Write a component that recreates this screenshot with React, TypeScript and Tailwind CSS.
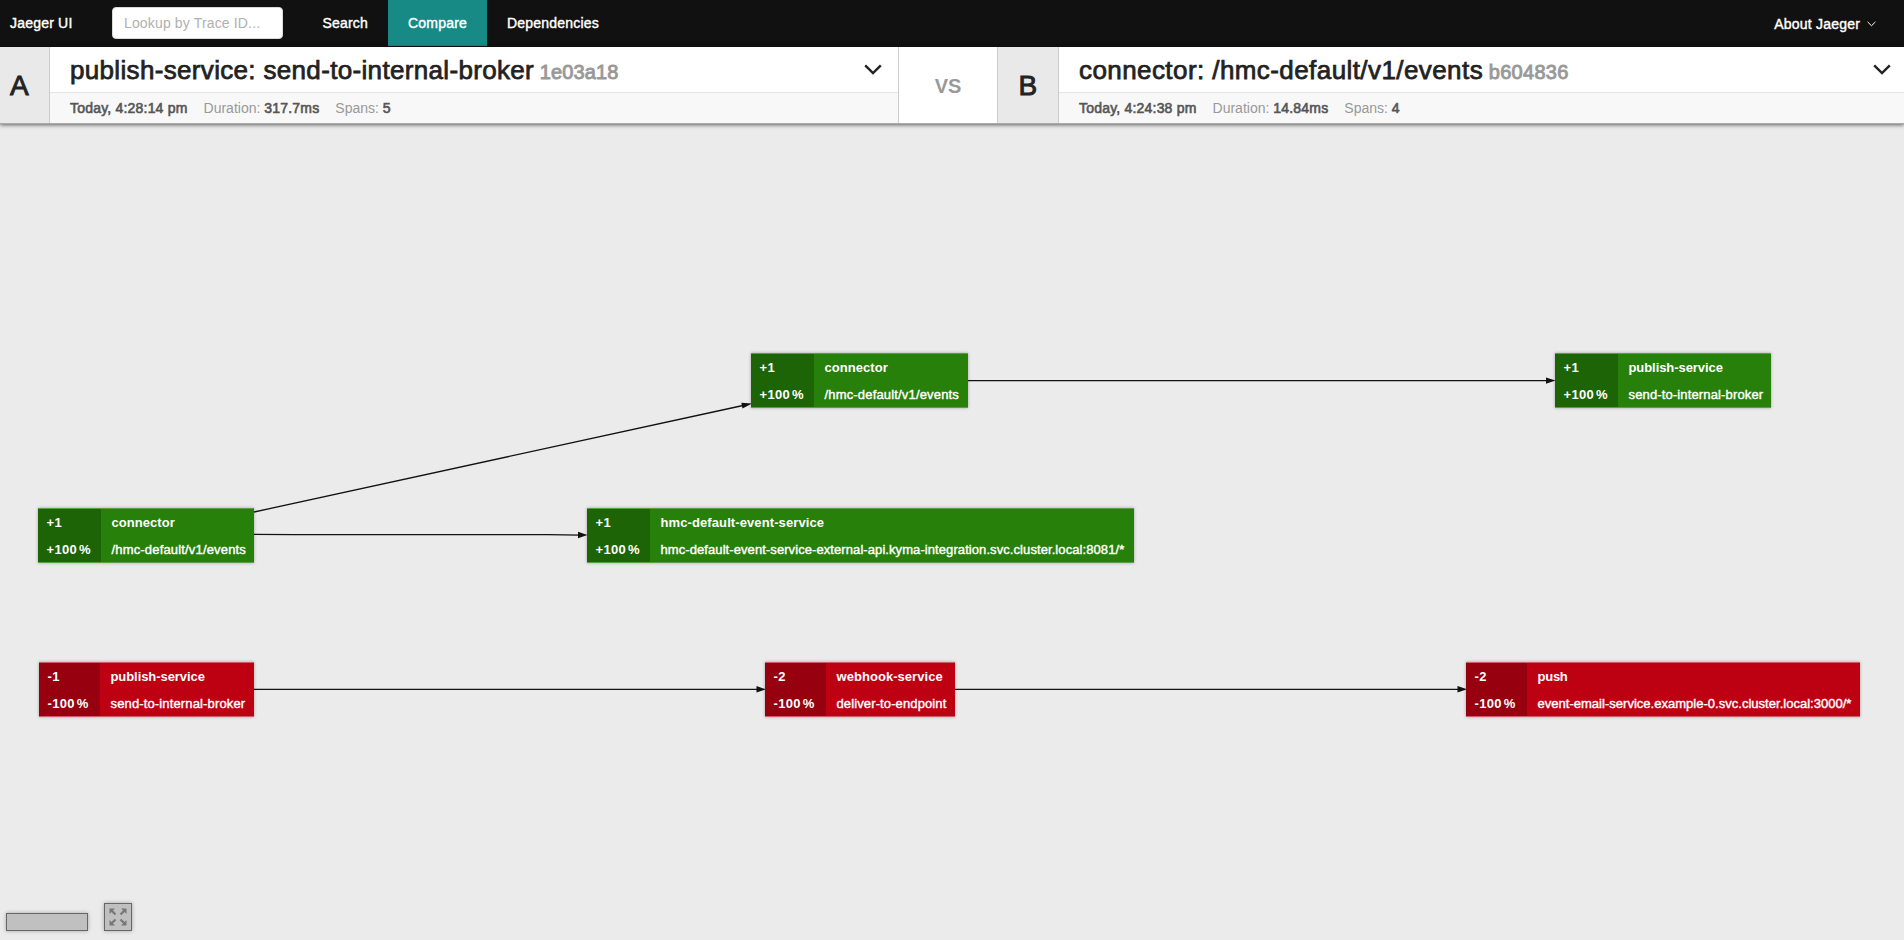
import React from "react";

type Tone = "added" | "removed";

interface DiffNode {
  id: string;
  tone: Tone;
  count: string;
  percent: string;
  service: string;
  operation: string;
  place: string;
  side: string;
  serviceTracking: string;
  operationTracking: string;
}

const nodes: DiffNode[] = [
  { id: "n1", tone: "added", count: "+1", percent: "+100", service: "connector", operation: "/hmc-default/v1/events", place: "left-[38px] top-[384px] w-[216px]", side: "w-[63px]", serviceTracking: "tracking-[0.06px]", operationTracking: "tracking-[0.17px]" },
  { id: "n2", tone: "added", count: "+1", percent: "+100", service: "connector", operation: "/hmc-default/v1/events", place: "left-[751px] top-[229px] w-[217px]", side: "w-[63px]", serviceTracking: "tracking-[0.06px]", operationTracking: "tracking-[0.17px]" },
  { id: "n3", tone: "added", count: "+1", percent: "+100", service: "publish-service", operation: "send-to-internal-broker", place: "left-[1555px] top-[229px] w-[216px]", side: "w-[63px]", serviceTracking: "tracking-[-0.07px]", operationTracking: "tracking-[0.14px]" },
  { id: "n4", tone: "added", count: "+1", percent: "+100", service: "hmc-default-event-service", operation: "hmc-default-event-service-external-api.kyma-integration.svc.cluster.local:8081/*", place: "left-[587px] top-[384px] w-[547px]", side: "w-[63px]", serviceTracking: "tracking-[0.1px]", operationTracking: "tracking-[0.08px]" },
  { id: "n5", tone: "removed", count: "-1", percent: "-100", service: "publish-service", operation: "send-to-internal-broker", place: "left-[39px] top-[538px] w-[215px]", side: "w-[61px]", serviceTracking: "tracking-[-0.07px]", operationTracking: "tracking-[0.14px]" },
  { id: "n6", tone: "removed", count: "-2", percent: "-100", service: "webhook-service", operation: "deliver-to-endpoint", place: "left-[765px] top-[538px] w-[190px]", side: "w-[61px]", serviceTracking: "tracking-[0.05px]", operationTracking: "tracking-[0.12px]" },
  { id: "n7", tone: "removed", count: "-2", percent: "-100", service: "push", operation: "event-email-service.example-0.svc.cluster.local:3000/*", place: "left-[1466px] top-[538px] w-[394px]", side: "w-[61px]", serviceTracking: "tracking-[-0.25px]", operationTracking: "tracking-[0.02px]" },
];

const tones: Record<Tone, { box: string; side: string }> = {
  added: { box: "bg-[#26800a] border-[#5a9f46]", side: "bg-[#1d6406]" },
  removed: { box: "bg-[#be0013] border-[#cf5f6a]", side: "bg-[#97000f]" },
};

function NodeCard({ node }: { node: DiffNode }) {
  const tone = tones[node.tone];
  return (
    <div className={`absolute flex h-[55px] border-y text-[13px] leading-[27px] text-white shadow-[0_0_3px_rgba(0,0,0,0.3)] ${tone.box} ${node.place}`}>
      <div className={`shrink-0 pl-[8.5px] font-bold tracking-[0.3px] ${tone.side} ${node.side}`}>
        <div>{node.count}</div>
        <div className="flex gap-0.5">
          <span>{node.percent}</span>
          <span>%</span>
        </div>
      </div>
      <div className="whitespace-nowrap pl-[10.5px]">
        <div className={`font-bold ${node.serviceTracking}`}>{node.service}</div>
        <div className={`[-webkit-text-stroke:0.4px_white] ${node.operationTracking}`}>{node.operation}</div>
      </div>
    </div>
  );
}

function Chevron({ className, stroke }: { className: string; stroke: number }) {
  return (
    <svg className={className} viewBox="0 0 18 11" fill="none" stroke="currentColor" strokeWidth={stroke}>
      <path d="M1.2 1.3 9 9l7.8-7.7" />
    </svg>
  );
}

interface TraceProps {
  letter: string;
  letterBox: string;
  contentBox: string;
  titleRow: string;
  title: string;
  titleTracking: string;
  id: string;
  idTracking: string;
  time: string;
  duration: string;
  spans: string;
}

function Trace({ letter, letterBox, contentBox, titleRow, title, titleTracking, id, idTracking, time, duration, spans }: TraceProps) {
  return (
    <>
      <div className={`flex shrink-0 items-center border-r border-[#ccc] bg-[#e9e9e9] pt-px text-[28px] text-[#222] [-webkit-text-stroke:0.9px_#222] ${letterBox}`}>
        {letter}
      </div>
      <div className={`flex shrink-0 flex-col ${contentBox}`}>
        <div className={`flex h-[46px] items-center border-b border-[#e5e5e5] pl-5 ${titleRow}`}>
          <h1 className={`flex-1 whitespace-nowrap pt-0.5 text-[26px] leading-[44px] text-[#222] [-webkit-text-stroke:0.75px_#222] ${titleTracking}`}>
            {title}{" "}
            <span className={`-ml-0.5 text-[20px] text-[#999] [-webkit-text-stroke:0.9px_#999] ${idTracking}`}>{id}</span>
          </h1>
          <Chevron className="h-[11px] w-[18px] text-[#222]" stroke={2.4} />
        </div>
        <div className="flex flex-1 items-center gap-4 bg-[#f8f8f8] pl-5 pt-px text-[14px] text-[#999]">
          <span className="tracking-[0.2px] text-[#555] [-webkit-text-stroke:0.6px_#555]">{time}</span>
          <span>
            Duration: <b className="font-normal tracking-[0.2px] text-[#555] [-webkit-text-stroke:0.6px_#555]">{duration}</b>
          </span>
          <span>
            Spans: <b className="font-normal text-[#555] [-webkit-text-stroke:0.6px_#555]">{spans}</b>
          </span>
        </div>
      </div>
    </>
  );
}

function Edges() {
  return (
    <svg className="absolute left-0 top-0 h-[816px] w-[1904px]" viewBox="0 124 1904 816" fill="none" stroke="#111" strokeWidth="1.3">
      <path d="M254 512 743 405.5M968 380.6h579M254 534.4l40 .3h254l32 .4M254 689.3h504M955 689.3h504" />
      <g fill="#111" stroke="none">
        <path d="m752 403.6-9.5 5-1.200-5.900z" />
        <path d="m1555.500 380.600-9.500 3.200v-6.400z" />
        <path d="m587.500 535-9.500 3.200v-6.400z" />
        <path d="m766 689.300-9.500 3.200v-6.400z" />
        <path d="m1467 689.300-9.500 3.200v-6.400z" />
      </g>
    </svg>
  );
}

export default function App() {
  return (
    <div className="flex h-[940px] w-[1904px] flex-col overflow-hidden bg-[#ebebeb] font-['Liberation_Sans',Arial,sans-serif]">
      <nav className="flex h-[47px] shrink-0 bg-[#111] text-[14px] leading-[46px] tracking-[0.2px] text-white [-webkit-text-stroke:0.4px_white]">
        <div className="w-28 pl-2.5">Jaeger UI</div>
        <div className="mt-[7px] flex h-8 w-[171px] items-center rounded border border-[#d9d9d9] bg-white pl-[11px] tracking-[0.15px] text-[#b0b0b0] [-webkit-text-stroke:0]">
          Lookup by Trace ID...
        </div>
        <div className="ml-5 w-[85px] pl-[19.5px]">Search</div>
        <div className="h-[46px] w-[99px] bg-[#188a85] text-center">Compare</div>
        <div className="px-5">Dependencies</div>
        <div className="ml-auto flex items-center pr-[28px]">
          About Jaeger
          <Chevron className="ml-[7px] h-[6px] w-[9px]" stroke={2} />
        </div>
      </nav>

      <header className="z-10 flex h-[77px] shrink-0 border-b border-[#aaa] bg-white shadow-[0_1px_4px_rgba(0,0,0,0.6)]">
        <Trace letter="A" letterBox="w-[50px] pl-[10px]" contentBox="w-[848px]" titleRow="pr-[16px]" title="publish-service: send-to-internal-broker" titleTracking="tracking-[0.33px]" id="1e03a18" idTracking="tracking-[0.15px]" time="Today, 4:28:14 pm" duration="317.7ms" spans="5" />
        <div className="flex w-[100px] shrink-0 items-center justify-center border-x border-[#ccc] pt-px text-[20px] font-bold text-[#999]">VS</div>
        <Trace letter="B" letterBox="w-[61px] pl-[20.5px]" contentBox="w-[845px]" titleRow="pr-[13px]" title="connector: /hmc-default/v1/events" titleTracking="tracking-[0.42px]" id="b604836" idTracking="tracking-[0.3px]" time="Today, 4:24:38 pm" duration="14.84ms" spans="4" />
      </header>

      <main className="relative flex-1">
        <Edges />
        {nodes.map((node) => (
          <NodeCard key={node.id} node={node} />
        ))}
        <div className="absolute bottom-[9px] left-[6px] flex items-end gap-4">
          <div className="h-[18px] w-[82px] border border-[#666] bg-[#c0c0c0] shadow-[0_0_4px_rgba(0,0,0,0.3)]" />
          <button className="flex size-7 items-center justify-center border border-[#666] bg-[#c0c0c0] text-[#777] shadow-[0_0_4px_rgba(0,0,0,0.3)]">
            <svg className="size-[18px]" viewBox="0 0 18 18" fill="currentColor" stroke="currentColor" strokeWidth="2.2">
              <path d="M2 2 6.500 6.500M16 2l-4.500 4.500M2 16l4.500-4.500M16 16l-4.500-4.500" />
              <path stroke="none" d="M.5.500h5.500l-5.500 5.500zM17.500.500v5.500l-5.500-5.500zM.500 17.500v-5.500l5.500 5.500zM17.500 17.500h-5.500l5.500-5.500z" />
            </svg>
          </button>
        </div>
      </main>
    </div>
  );
}
